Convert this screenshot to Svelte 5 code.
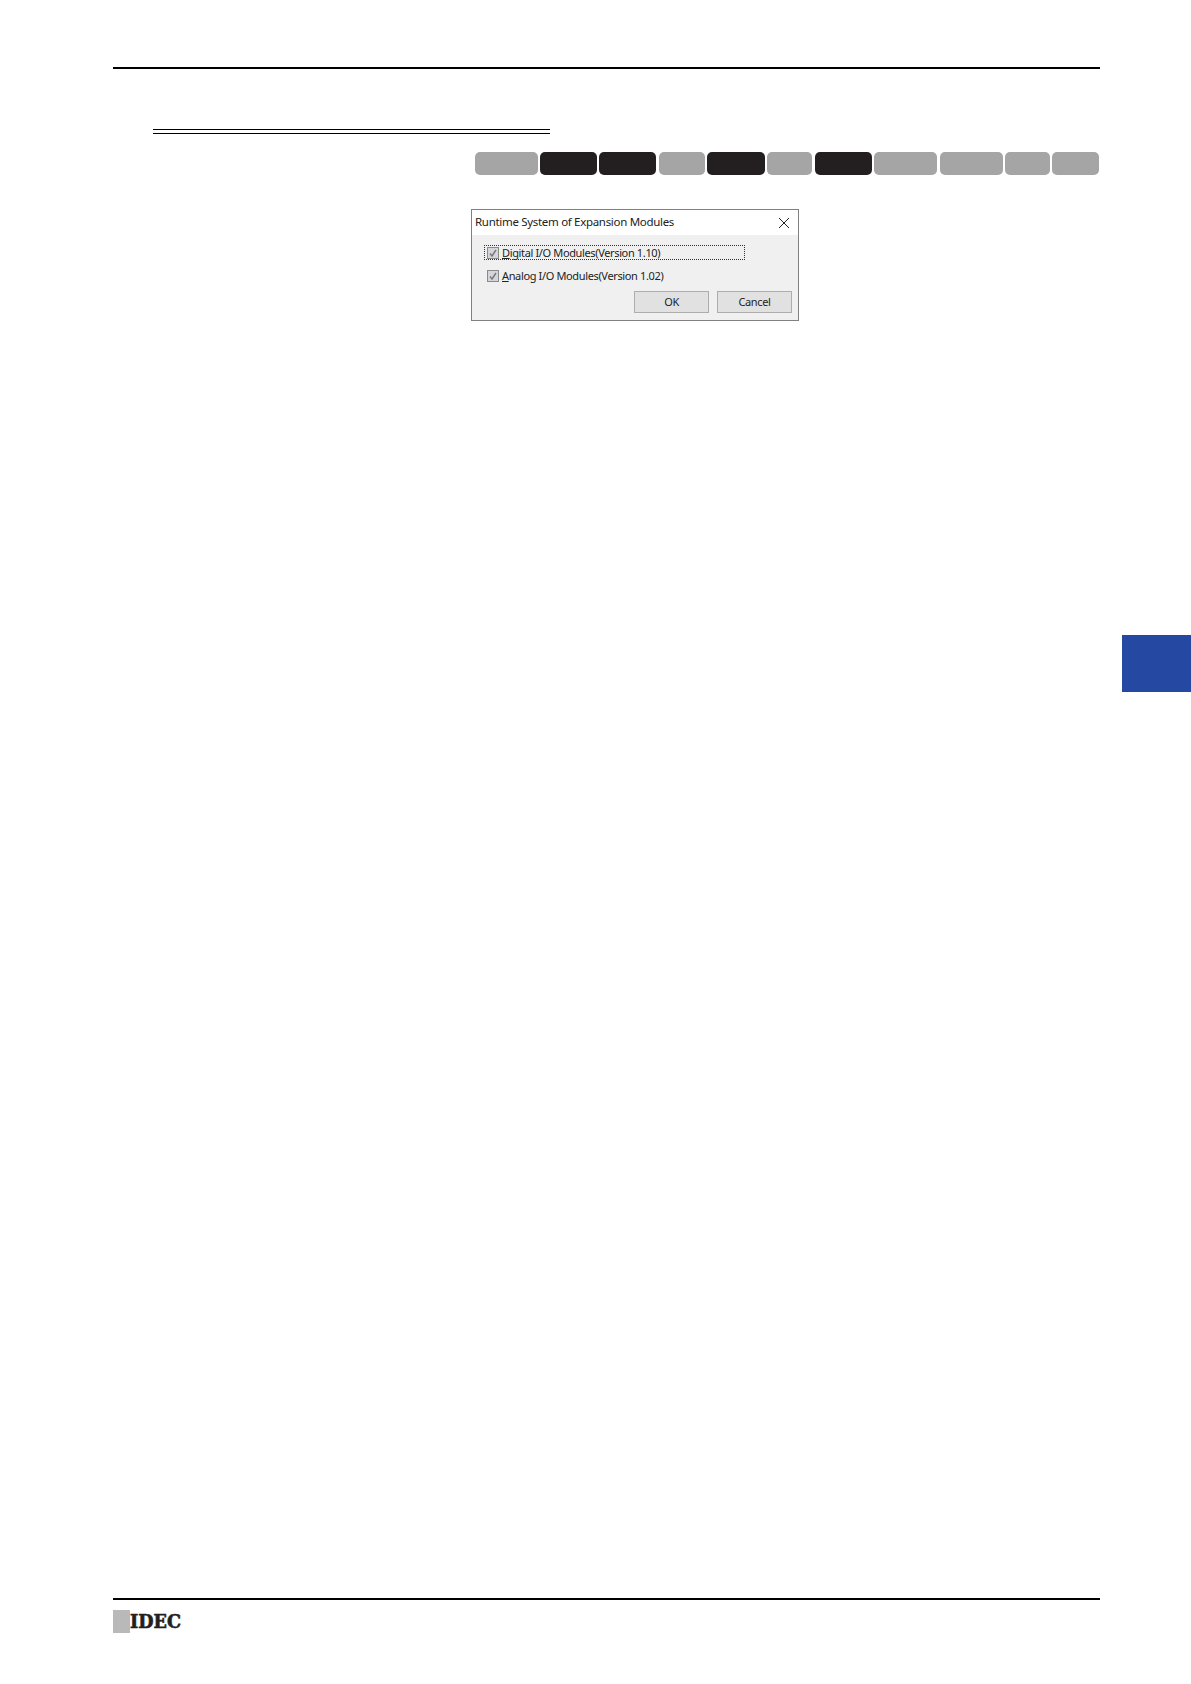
<script>
  const pills = [
    { w: 62.5, on: false }, { w: 57, on: true }, { w: 57, on: true }, { w: 46, on: false },
    { w: 58, on: true }, { w: 45, on: false }, { w: 57, on: true }, { w: 63, on: false },
    { w: 63, on: false }, { w: 45, on: false }, { w: 46.5, on: false }
  ];
</script>

<div class="page">
  <div class="rule-top"></div>
  <div class="double"></div>
  <div class="pills">
    {#each pills as p}
      <span class="pill" class:on={p.on} style="width:{p.w}px"></span>
    {/each}
  </div>

  <section class="dialog">
    <header class="title">
      <span>Runtime System of Expansion Modules</span>
      <svg class="close" viewBox="0 0 12 12" width="12" height="12"><path d="M1 1L11 11M11 1L1 11" stroke="#222" stroke-width="1" fill="none"/></svg>
    </header>
    <div class="body">
      <div class="row focus">
        <svg class="check" viewBox="0 0 12 12" width="12" height="12"><rect x="0.5" y="0.5" width="11" height="11" fill="#d4d6da" stroke="#8a8a8a"/><path d="M3 6.5L5 9L9 3" stroke="#777" stroke-width="1.4" fill="none"/></svg>
        <span><u>D</u>igital I/O Modules(Version 1.10)</span>
      </div>
      <div class="row second">
        <svg class="check" viewBox="0 0 12 12" width="12" height="12"><rect x="0.5" y="0.5" width="11" height="11" fill="#d4d6da" stroke="#8a8a8a"/><path d="M3 6.5L5 9L9 3" stroke="#777" stroke-width="1.4" fill="none"/></svg>
        <span><u>A</u>nalog I/O Modules(Version 1.02)</span>
      </div>
      <div class="buttons">
        <button><span class="label">OK</span></button>
        <button><span class="label">Cancel</span></button>
      </div>
    </div>
  </section>

  <div class="tab"></div>

  <footer class="foot">
    <div class="rule-bottom"></div>
    <div class="logo"><span class="square"></span><span class="idec">IDEC</span></div>
  </footer>
</div>

<style>
  :global(body) { margin: 0; background: #fff; }
  .page {
    height: 1684px;
    box-sizing: border-box;
    padding: 67px 0 0;
    display: flex;
    flex-direction: column;
    overflow: hidden;
    background: #fff;
    font-family: "Noto Sans", "Open Sans", sans-serif;
  }
  .rule-top {
    margin: 0 91px 0 113px;
    height: 2px;
    background: #000;
  }
  .double {
    margin: 60px 0 0 153px;
    width: 397px;
    height: 5px;
    box-sizing: border-box;
    border-top: 1px solid #000;
    border-bottom: 1px solid #000;
  }
  .pills {
    margin: 18px 0 0 475px;
    display: flex;
    gap: 2.4px;
  }
  .pill {
    height: 23px;
    border-radius: 5px;
    background: #a6a5a5;
  }
  .pill.on { background: #231f20; }
  .dialog {
    margin: 34px 0 0 471px;
    width: 328px;
    height: 112px;
    box-sizing: border-box;
    border: 1px solid #808080;
    background: #f0f0f0;
    color: #222;
    display: flex;
    flex-direction: column;
  }
  .title {
    height: 25px;
    flex: none;
    background: #fff;
    display: flex;
    align-items: center;
    justify-content: space-between;
    padding: 0 8px 2px 3px;
    box-sizing: border-box;
    font-size: 11.5px;
    letter-spacing: -0.31px;
  }
  .close { margin-top: 2px; }
  .body {
    flex: 1;
    display: flex;
    flex-direction: column;
    padding: 10px 6px 7px 12px;
    font-size: 11px;
    letter-spacing: -0.36px;
  }
  .row {
    display: flex;
    align-items: center;
    gap: 3px;
    height: 15px;
    width: 261px;
    box-sizing: border-box;
    padding-left: 3px;
  }
  .row.focus { outline: 1px dotted #333; outline-offset: -1px; }
  .row.second { margin-top: 8px; }
  .check { flex: none; }
  .buttons {
    margin-top: auto;
    display: flex;
    justify-content: flex-end;
    gap: 8px;
  }
  button {
    width: 75px;
    height: 22px;
    padding: 0 0 2px;
    border: 1px solid #adadad;
    background: #e1e1e1;
    color: #222;
    font: inherit;
    letter-spacing: inherit;
  }
  .tab {
    margin: 314px 0 0 1122px;
    width: 69px;
    height: 57px;
    background: #2549a3;
  }
  .foot { margin-top: auto; padding-bottom: 51px; }
  .rule-bottom {
    margin: 0 91px 0 113px;
    height: 2px;
    background: #000;
  }
  .logo {
    margin: 10px 0 0 113px;
    display: flex;
    align-items: center;
  }
  .square {
    width: 17px;
    height: 23px;
    background: #b9b9b9;
  }
  .idec {
    font-family: "DejaVu Serif", serif;
    font-weight: 900;
    font-size: 17.6px;
    line-height: 23px;
    color: #231f20;
    -webkit-text-stroke: 0.6px #231f20;
  }
</style>
